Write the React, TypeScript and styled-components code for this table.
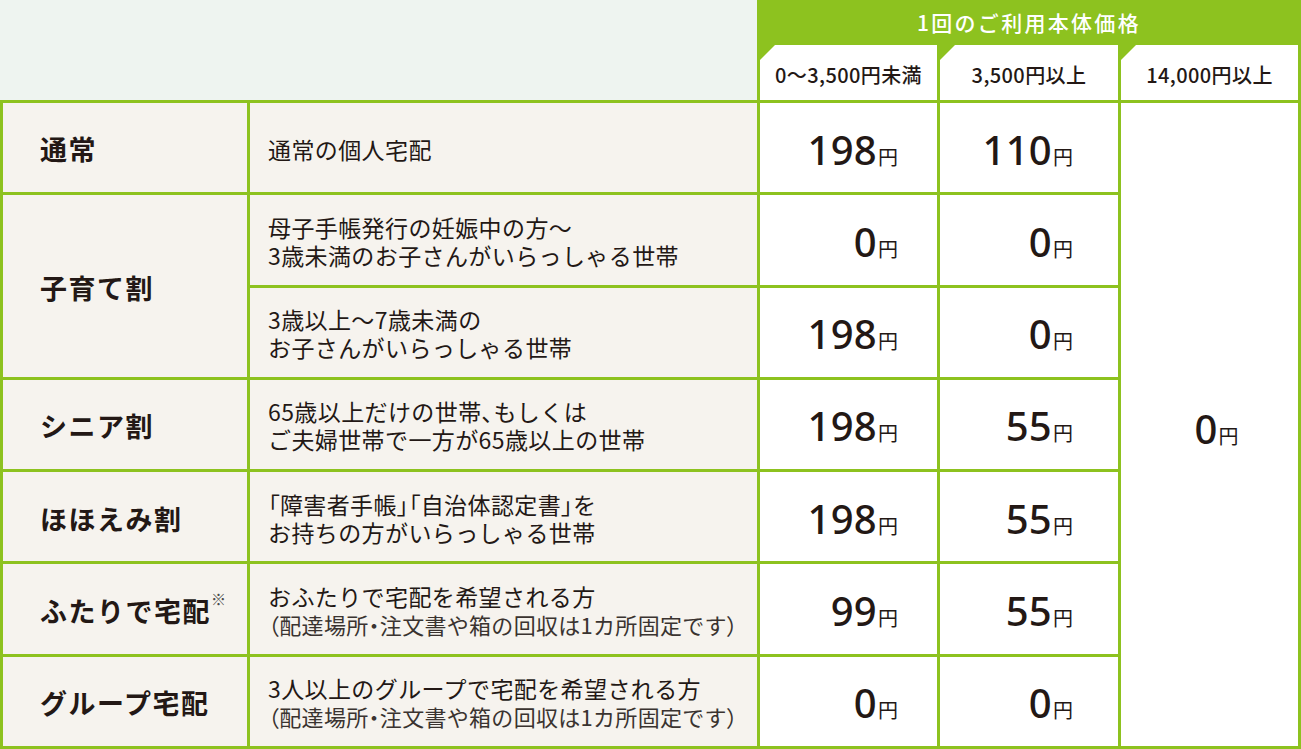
import React from "react";
import styled, { createGlobalStyle } from "styled-components";

const GREEN = "#8dc21f";
const INK = "#231815";
const JP = `"Noto Sans CJK JP", "Noto Sans", sans-serif`;
const NUM = `"Noto Sans", "Open Sans", "Noto Sans CJK JP", sans-serif`;

const Global = createGlobalStyle`
  html, body { margin: 0; padding: 0; background: #ffffff; }
  body { font-family: ${JP}; color: ${INK}; }
`;

const Table = styled.div`
  width: 1301px;
  height: 749px;
  display: flex;
  flex-direction: column;
  font-family: ${JP};
  color: ${INK};
`;

const HeaderRow = styled.div`
  display: flex;
  height: 100px;
`;

const HeaderBlank = styled.div`
  flex: 0 0 757px;
  background: #eef4f0;
`;

const PriceHead = styled.div`
  flex: 1;
  display: flex;
  flex-direction: column;
  background: ${GREEN};
  padding: 0 3px 0 3px;
`;

const PriceTitle = styled.div`
  height: 45px;
  display: flex;
  align-items: center;
  justify-content: center;
  color: #ffffff;
  font-size: 21px;
  font-weight: 500;
  letter-spacing: 2.3px;
  padding-bottom: 2px;
  box-sizing: border-box;
`;

const TierRow = styled.div`
  flex: 1;
  display: grid;
  grid-template-columns: 177px 178px 177px;
  gap: 3px;
`;

const TierCell = styled.div`
  background: #ffffff;
  clip-path: polygon(15px 0, 100% 0, 100% 100%, 0 100%, 0 15px);
  display: flex;
  align-items: center;
  justify-content: center;
  font-size: 20px;
  font-weight: 500;
  letter-spacing: 0.4px;
  padding-top: 3px;
  box-sizing: border-box;
`;

const Body = styled.div`
  height: 649px;
  box-sizing: border-box;
  display: grid;
  grid-template-columns: 244px 507px 177px 178px 177px;
  grid-template-rows: repeat(7, 1fr);
  gap: 3px;
  padding: 3px;
  background: ${GREEN};
`;

const Label = styled.div<{ $span?: number }>`
  grid-row: span ${(p) => p.$span ?? 1};
  background: #f6f3ee;
  display: flex;
  align-items: center;
  padding-left: 37px;
  padding-top: 4px;
  box-sizing: border-box;
  font-size: 27px;
  font-weight: 700;
  letter-spacing: 1.5px;
  line-height: 1.2;
`;

const Mark = styled.span`
  font-size: 15px;
  font-weight: 400;
  color: #4a4a4a;
  vertical-align: top;
  line-height: 1;
  letter-spacing: 0;
  position: relative;
  top: -4px;
`;

const Desc = styled.div`
  background: #f6f3ee;
  display: flex;
  flex-direction: column;
  justify-content: center;
  padding-left: 18px;
  padding-top: 2px;
  box-sizing: border-box;
  font-size: 23px;
  letter-spacing: 0.4px;
  line-height: 28px;
`;

const Line = styled.span`
  display: block;
  white-space: nowrap;
`;

const Note = styled.span`
  display: block;
  white-space: nowrap;
  font-size: 22px;
  letter-spacing: 0.3px;
  color: #3a3330;
`;

const Tight = styled.span`
  font-feature-settings: "palt";
`;

const Price = styled.div<{ $pad: number }>`
  background: #ffffff;
  display: flex;
  align-items: center;
  justify-content: flex-end;
  padding-right: ${(p) => p.$pad}px;
  padding-top: 4px;
  box-sizing: border-box;
`;

const Free = styled.div`
  grid-row: span 7;
  background: #ffffff;
  display: flex;
  align-items: center;
  justify-content: center;
  padding-left: 14px;
  padding-top: 10px;
  box-sizing: border-box;
`;

const Amount = styled.span`
  display: inline-flex;
  align-items: baseline;
  line-height: 1;
`;

const Num = styled.span`
  font-family: ${NUM};
  font-size: 40px;
  font-weight: 500;
  letter-spacing: 0.3px;
`;

const Yen = styled.span`
  font-family: ${JP};
  font-size: 20px;
  margin-left: 1px;
`;

const Yen$ = ({ v }: { v: string }) => (
  <Amount>
    <Num>{v}</Num>
    <Yen>円</Yen>
  </Amount>
);

type Row = {
  label?: React.ReactNode;
  span?: number;
  desc: React.ReactNode;
  a: string;
  b: string;
};

const rows: Row[] = [
  { label: "通常", desc: <Line>通常の個人宅配</Line>, a: "198", b: "110" },
  {
    label: "子育て割",
    span: 2,
    desc: (
      <>
        <Line>母子手帳発行の妊娠中の方〜</Line>
        <Line>3歳未満のお子さんがいらっしゃる世帯</Line>
      </>
    ),
    a: "0",
    b: "0",
  },
  {
    desc: (
      <>
        <Line>3歳以上〜7歳未満の</Line>
        <Line>お子さんがいらっしゃる世帯</Line>
      </>
    ),
    a: "198",
    b: "0",
  },
  {
    label: "シニア割",
    desc: (
      <>
        <Line>
          65歳以上だけの世帯<Tight>、</Tight>もしくは
        </Line>
        <Line>ご夫婦世帯で一方が65歳以上の世帯</Line>
      </>
    ),
    a: "198",
    b: "55",
  },
  {
    label: "ほほえみ割",
    desc: (
      <>
        <Line>
          <Tight>「</Tight>障害者手帳<Tight>」「</Tight>自治体認定書<Tight>」</Tight>を
        </Line>
        <Line>お持ちの方がいらっしゃる世帯</Line>
      </>
    ),
    a: "198",
    b: "55",
  },
  {
    label: (
      <span>
        ふたりで宅配<Mark>※</Mark>
      </span>
    ),
    desc: (
      <>
        <Line>おふたりで宅配を希望される方</Line>
        <Note>
          <Tight>（</Tight>配達場所<Tight>・</Tight>注文書や箱の回収は1カ所固定です<Tight>）</Tight>
        </Note>
      </>
    ),
    a: "99",
    b: "55",
  },
  {
    label: "グループ宅配",
    desc: (
      <>
        <Line>3人以上のグループで宅配を希望される方</Line>
        <Note>
          <Tight>（</Tight>配達場所<Tight>・</Tight>注文書や箱の回収は1カ所固定です<Tight>）</Tight>
        </Note>
      </>
    ),
    a: "0",
    b: "0",
  },
];

export default function App() {
  return (
    <>
      <Global />
      <Table>
        <HeaderRow>
          <HeaderBlank />
          <PriceHead>
            <PriceTitle>1回のご利用本体価格</PriceTitle>
            <TierRow>
              <TierCell>0〜3,500円未満</TierCell>
              <TierCell>3,500円以上</TierCell>
              <TierCell>14,000円以上</TierCell>
            </TierRow>
          </PriceHead>
        </HeaderRow>
        <Body>
          {rows.map((r, i) => (
            <React.Fragment key={i}>
              {r.label !== undefined && <Label $span={r.span}>{r.label}</Label>}
              <Desc>{r.desc}</Desc>
              <Price $pad={39}>
                <Yen$ v={r.a} />
              </Price>
              <Price $pad={45}>
                <Yen$ v={r.b} />
              </Price>
              {i === 0 && (
                <Free>
                  <Yen$ v="0" />
                </Free>
              )}
            </React.Fragment>
          ))}
        </Body>
      </Table>
    </>
  );
}
